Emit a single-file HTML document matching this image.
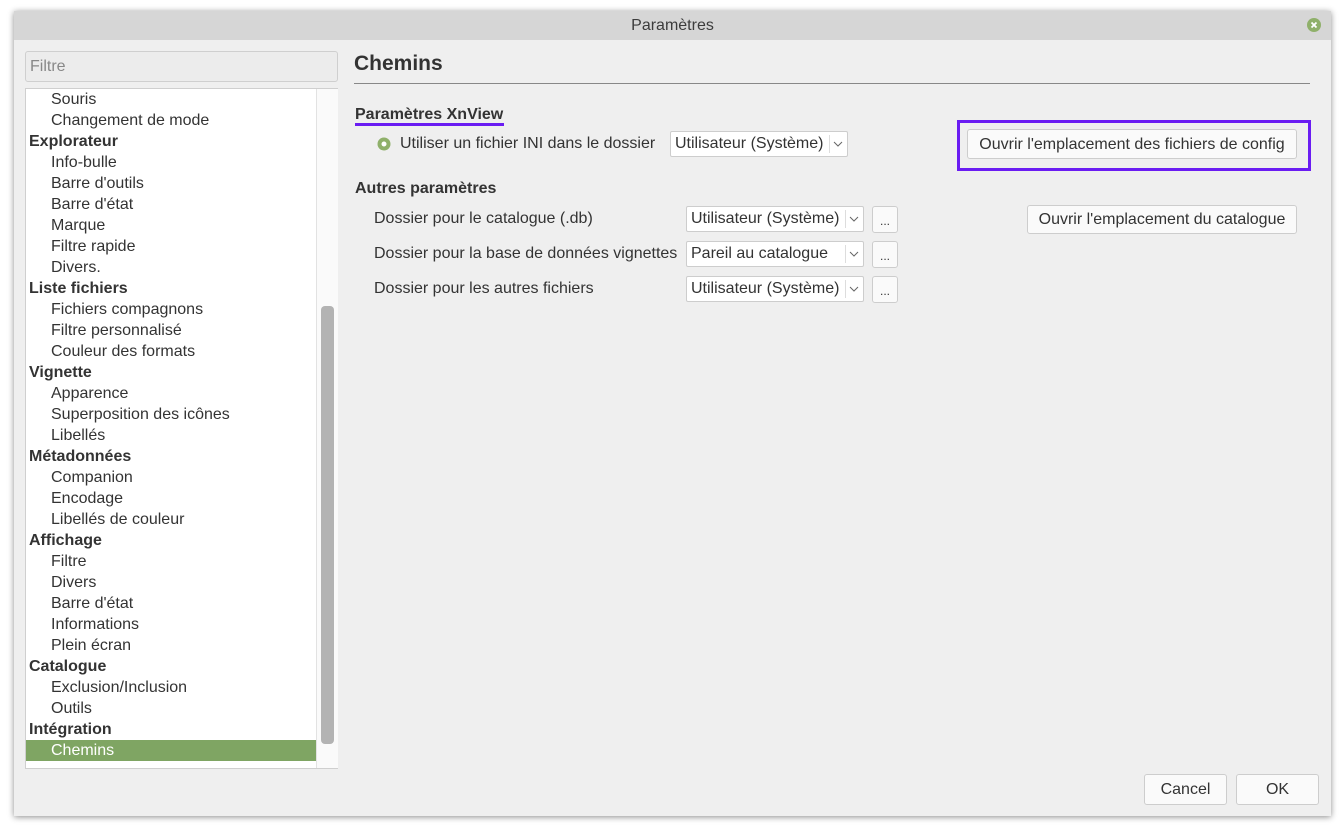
<!DOCTYPE html>
<html><head><meta charset="utf-8"><style>
body{margin:0;width:1339px;height:828px;background:#fff;position:relative;overflow:hidden;font-family:"Liberation Sans",sans-serif;color:#333;font-size:16px}
.a{position:absolute;white-space:nowrap}
.win{position:absolute;left:14px;top:11px;width:1317px;height:805px;background:#efefef;box-shadow:0 1px 6px rgba(0,0,0,.45)}
.title{position:absolute;left:14px;top:11px;width:1317px;height:29px;background:#d6d6d6;text-align:center;line-height:30px;font-size:16px;color:#3c3c3c}
.tree{position:absolute;left:25px;top:88px;width:312px;height:679px;background:#fff;border:1px solid #cfcfcf;border-right:none;overflow:hidden}
.row{position:absolute;left:0;height:21px;line-height:21px;width:290px;box-sizing:border-box}
.b{font-weight:bold;padding-left:3px}
.i{padding-left:25px}
.btn{position:absolute;background:#fafafa;border:1px solid #cdcdcd;border-radius:3px;text-align:center;box-sizing:border-box}
.cb{position:absolute;background:#fff;border:1px solid #cdcdcd;border-radius:2px;box-sizing:border-box;padding-left:4px;line-height:24px}
.cb:after{content:"";position:absolute;top:3px;height:18px;width:1px;background:#ddd;right:17px}
.cb svg{position:absolute;right:4px;top:9px}
</style></head><body>
<div class="win"></div>
<div class="title">Paramètres</div>
<svg class="a" style="left:1307px;top:18px" width="14" height="14"><circle cx="7" cy="7" r="7" fill="#8fb06a"/><path d="M4.5 4.5L9.5 9.5M9.5 4.5L4.5 9.5" stroke="#fff" stroke-width="1.8"/></svg>
<div class="a" style="left:25px;top:51px;width:313px;height:31px;border:1px solid #cfcfcf;border-radius:3px;background:#ececec;line-height:30px;padding-left:4px;box-sizing:border-box;color:#888;font-size:16px">Filtre</div>
<div class="tree">
<div class="row i" style="top:0">Souris</div>
<div class="row i" style="top:21px">Changement de mode</div>
<div class="row b" style="top:42px">Explorateur</div>
<div class="row i" style="top:63px">Info-bulle</div>
<div class="row i" style="top:84px">Barre d'outils</div>
<div class="row i" style="top:105px">Barre d'état</div>
<div class="row i" style="top:126px">Marque</div>
<div class="row i" style="top:147px">Filtre rapide</div>
<div class="row i" style="top:168px">Divers.</div>
<div class="row b" style="top:189px">Liste fichiers</div>
<div class="row i" style="top:210px">Fichiers compagnons</div>
<div class="row i" style="top:231px">Filtre personnalisé</div>
<div class="row i" style="top:252px">Couleur des formats</div>
<div class="row b" style="top:273px">Vignette</div>
<div class="row i" style="top:294px">Apparence</div>
<div class="row i" style="top:315px">Superposition des icônes</div>
<div class="row i" style="top:336px">Libellés</div>
<div class="row b" style="top:357px">Métadonnées</div>
<div class="row i" style="top:378px">Companion</div>
<div class="row i" style="top:399px">Encodage</div>
<div class="row i" style="top:420px">Libellés de couleur</div>
<div class="row b" style="top:441px">Affichage</div>
<div class="row i" style="top:462px">Filtre</div>
<div class="row i" style="top:483px">Divers</div>
<div class="row i" style="top:504px">Barre d'état</div>
<div class="row i" style="top:525px">Informations</div>
<div class="row i" style="top:546px">Plein écran</div>
<div class="row b" style="top:567px">Catalogue</div>
<div class="row i" style="top:588px">Exclusion/Inclusion</div>
<div class="row i" style="top:609px">Outils</div>
<div class="row b" style="top:630px">Intégration</div>
<div class="row i" style="top:651px;background:#7fa563;color:#fff">Chemins</div>
<div class="a" style="left:290px;top:0;width:22px;height:679px;background:#fafafa;border-left:1px solid #e2e2e2"></div>
<div class="a" style="left:295px;top:217px;width:13px;height:438px;background:#b3b3b3;border-radius:4px"></div>
</div>
<div class="a" style="left:354px;top:52px;font-size:21px;font-weight:bold;color:#333">Chemins</div>
<div class="a" style="left:354px;top:83px;width:956px;height:1px;background:#888"></div>
<div class="a" style="left:355px;top:106px;font-weight:bold">Paramètres XnView</div>
<div class="a" style="left:355px;top:123px;width:149px;height:3px;background:#6a1cf2"></div>
<svg class="a" style="left:377px;top:137px" width="14" height="14"><circle cx="7" cy="7" r="6.5" fill="#8fb06a"/><circle cx="7" cy="7" r="2.5" fill="#fff"/></svg>
<div class="a" style="left:400px;top:135px">Utiliser un fichier INI dans le dossier</div>
<div class="cb a" style="left:670px;top:131px;width:178px;height:26px">Utilisateur (Système)<svg width="10" height="6"><path d="M1 1L5 5L9 1" stroke="#666" fill="none"/></svg></div>
<div class="a" style="left:957px;top:120px;width:354px;height:51px;border:3px solid #6a1cf2;box-sizing:border-box"></div>
<div class="btn" style="left:967px;top:129px;width:330px;height:30px;line-height:29px">Ouvrir l'emplacement des fichiers de config</div>
<div class="a" style="left:355px;top:180px;font-weight:bold">Autres paramètres</div>
<div class="a" style="left:374px;top:210px">Dossier pour le catalogue (.db)</div>
<div class="a" style="left:374px;top:245px">Dossier pour la base de données vignettes</div>
<div class="a" style="left:374px;top:280px">Dossier pour les autres fichiers</div>
<div class="cb a" style="left:686px;top:206px;width:178px;height:26px">Utilisateur (Système)<svg width="10" height="6"><path d="M1 1L5 5L9 1" stroke="#666" fill="none"/></svg></div>
<div class="cb a" style="left:686px;top:241px;width:178px;height:26px">Pareil au catalogue<svg width="10" height="6"><path d="M1 1L5 5L9 1" stroke="#666" fill="none"/></svg></div>
<div class="cb a" style="left:686px;top:276px;width:178px;height:26px">Utilisateur (Système)<svg width="10" height="6"><path d="M1 1L5 5L9 1" stroke="#666" fill="none"/></svg></div>
<div class="btn" style="left:872px;top:206px;width:26px;height:27px;line-height:28px;font-size:12px">...</div>
<div class="btn" style="left:872px;top:241px;width:26px;height:27px;line-height:28px;font-size:12px">...</div>
<div class="btn" style="left:872px;top:276px;width:26px;height:27px;line-height:28px;font-size:12px">...</div>
<div class="btn" style="left:1027px;top:205px;width:270px;height:29px;line-height:28px">Ouvrir l'emplacement du catalogue</div>
<div class="btn" style="left:1144px;top:774px;width:83px;height:31px;line-height:30px">Cancel</div>
<div class="btn" style="left:1236px;top:774px;width:83px;height:31px;line-height:30px">OK</div>
</body></html>
